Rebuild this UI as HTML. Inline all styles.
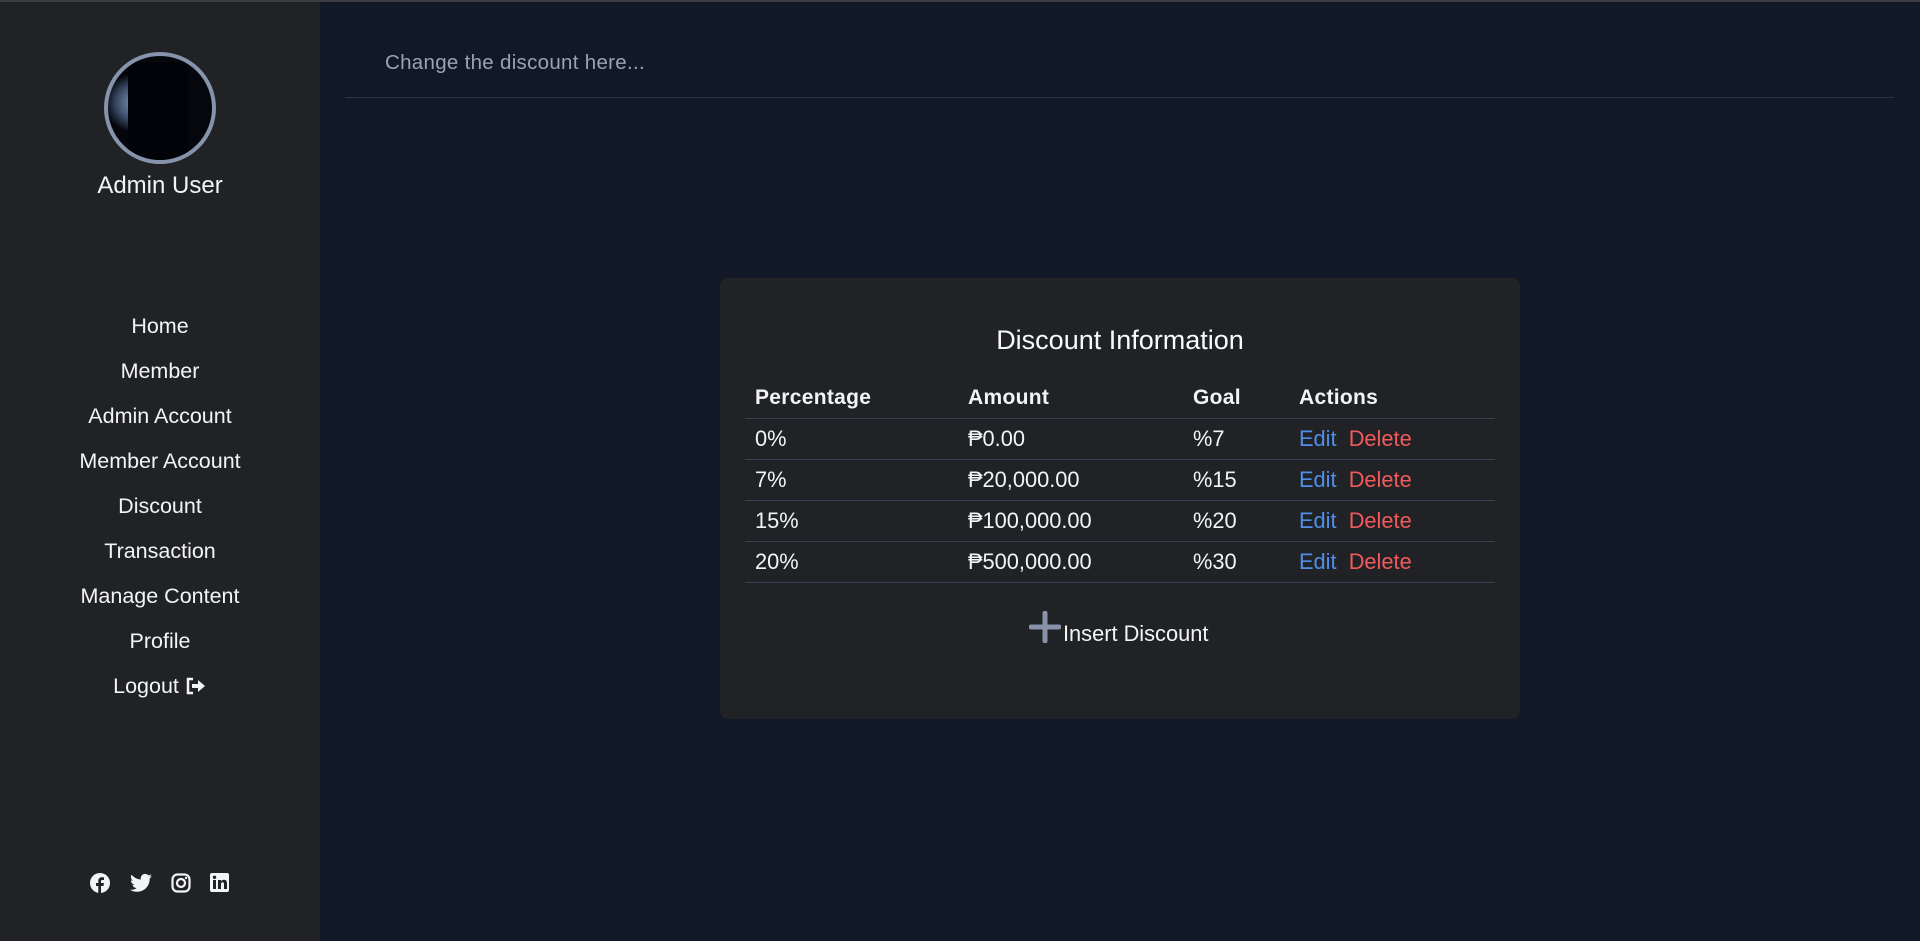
<!DOCTYPE html>
<html><head><meta charset="utf-8"><style>
*{margin:0;padding:0;box-sizing:border-box}
body{width:1920px;height:941px;background:#111827;font-family:"Liberation Sans",Arial,sans-serif;color:#e5e7eb;position:relative;overflow:hidden}
.topline{position:absolute;left:0;top:0;width:1920px;height:2px;background:#3a3d44}
.side{position:absolute;left:0;top:2px;width:320px;height:939px;background:#212226}
.avatar{position:absolute;left:104px;top:50px;width:112px;height:112px;border-radius:50%;border:4px solid #8593ab;background:radial-gradient(circle at 25% 45%,#7d94b3 0,#3a4a66 18%,#05070d 30%),#000;overflow:hidden}
.avatar:after{content:"";position:absolute;left:20px;top:6px;width:60px;height:100px;background:#020308;border-radius:10px 10px 0 0}
.name{position:absolute;left:0;width:320px;top:170px;text-align:center;font-size:24px;color:#f3f4f6}
.nav{position:absolute;left:0;width:320px;text-align:center;font-size:21.5px;color:#f3f4f6}
.soc{position:absolute;top:873px}
.hdr{position:absolute;left:385px;top:51px;font-size:20.5px;color:#9ca3af;letter-spacing:.3px}
.hline{position:absolute;left:345px;top:97px;width:1549px;height:1px;background:#2b3241}
.card{position:absolute;left:720px;top:278px;width:800px;height:441px;background:#212226;border-radius:8px}
.title{position:absolute;left:0;width:800px;top:325px;text-align:center;font-size:27px;color:#f9fafb}
.t{position:absolute;font-size:21.8px;color:#f3f4f6}
.b{font-weight:bold;font-size:21px;letter-spacing:.3px}
.l{position:absolute;left:745px;width:750px;height:1px;background:#374151}
.e{color:#4f8fea}.d{color:#f05a5a}
</style></head><body>
<div class="topline"></div>
<div class="side">
<div class="avatar"></div>
<div class="name">Admin User</div>
</div>
<div class="nav" style="top:314px">Home</div>
<div class="nav" style="top:359px">Member</div>
<div class="nav" style="top:404px">Admin Account</div>
<div class="nav" style="top:449px">Member Account</div>
<div class="nav" style="top:494px">Discount</div>
<div class="nav" style="top:539px">Transaction</div>
<div class="nav" style="top:584px">Manage Content</div>
<div class="nav" style="top:629px">Profile</div>
<div class="nav" style="top:674px">Logout <svg width="22" height="18" viewBox="0 0 22 18" style="vertical-align:-2px"><path d="M8 2H3v14h5" fill="none" stroke="#f3f4f6" stroke-width="2.5"/><path d="M7 7h6V3l7 6-7 6v-4H7z" fill="#f3f4f6"/></svg></div>
<svg class="soc" style="left:90px" width="20" height="20" viewBox="0 0 20 20"><circle cx="10" cy="10" r="10" fill="#f3f4f6"/><path d="M11 20v-7h2.5l.4-3H11V8.3c0-.8.3-1.3 1.4-1.3H14V4.4c-.4 0-1.3-.1-2.2-.1C9.700 4.300 8.300 5.600 8.300 7.900V10H6v3h2.3v7z" fill="#212226"/></svg>
<svg class="soc" style="left:130px" width="22" height="20" viewBox="0 0 24 20"><path d="M24 2.4a10 10 0 0 1-2.8.8A5 5 0 0 0 23.300.5a10 10 0 0 1-3.100 1.200A4.900 4.900 0 0 0 11.800 6.200 14 14 0 0 1 1.700 1 4.900 4.900 0 0 0 3.200 7.600 4.900 4.900 0 0 1 1 7v.1a4.900 4.900 0 0 0 3.900 4.800 5 5 0 0 1-2.200.1 4.900 4.900 0 0 0 4.600 3.400A9.900 9.900 0 0 1 0 17.400 14 14 0 0 0 7.500 19.600c9.100 0 14-7.500 14-14v-.6A10 10 0 0 0 24 2.400z" fill="#f3f4f6"/></svg>
<svg class="soc" style="left:171px" width="20" height="20" viewBox="0 0 20 20"><rect x="1.5" y="1.5" width="17" height="17" rx="5" fill="none" stroke="#f3f4f6" stroke-width="2.2"/><circle cx="10" cy="10" r="4" fill="none" stroke="#f3f4f6" stroke-width="2.2"/><circle cx="15" cy="5" r="1.2" fill="#f3f4f6"/></svg>
<svg class="soc" style="left:210px" width="19" height="19" viewBox="0 0 19 19"><rect width="19" height="19" rx="2" fill="#f3f4f6"/><rect x="3" y="7" width="3" height="9" fill="#212226"/><circle cx="4.5" cy="4.300" r="1.700" fill="#212226"/><path d="M8 7h3v1.400c.6-1 1.700-1.600 3-1.600 2.200 0 3 1.400 3 3.800V16h-3v-4.800c0-1.200-.3-2-1.300-2S11 10 11 11.200V16H8z" fill="#212226"/></svg>
<div class="hdr">Change the discount here...</div>
<div class="hline"></div>
<div class="card"></div>
<div class="title" style="left:720px">Discount Information</div>
<div class="t b" style="left:755px;top:386px">Percentage</div>
<div class="t b" style="left:968px;top:386px">Amount</div>
<div class="t b" style="left:1193px;top:386px">Goal</div>
<div class="t b" style="left:1299px;top:386px">Actions</div>
<div class="l" style="top:418px"></div>
<div class="t" style="left:755px;top:426px">0%</div><div class="t" style="left:968px;top:426px">₱0.00</div><div class="t" style="left:1193px;top:426px">%7</div><div class="t" style="left:1299px;top:426px"><span class="e">Edit</span>&nbsp; <span class="d">Delete</span></div>
<div class="l" style="top:459px"></div>
<div class="t" style="left:755px;top:467px">7%</div><div class="t" style="left:968px;top:467px">₱20,000.00</div><div class="t" style="left:1193px;top:467px">%15</div><div class="t" style="left:1299px;top:467px"><span class="e">Edit</span>&nbsp; <span class="d">Delete</span></div>
<div class="l" style="top:500px"></div>
<div class="t" style="left:755px;top:508px">15%</div><div class="t" style="left:968px;top:508px">₱100,000.00</div><div class="t" style="left:1193px;top:508px">%20</div><div class="t" style="left:1299px;top:508px"><span class="e">Edit</span>&nbsp; <span class="d">Delete</span></div>
<div class="l" style="top:541px"></div>
<div class="t" style="left:755px;top:549px">20%</div><div class="t" style="left:968px;top:549px">₱500,000.00</div><div class="t" style="left:1193px;top:549px">%30</div><div class="t" style="left:1299px;top:549px"><span class="e">Edit</span>&nbsp; <span class="d">Delete</span></div>
<div class="l" style="top:582px"></div>
<svg style="position:absolute;left:1029px;top:611px" width="32" height="32" viewBox="0 0 32 32"><path d="M16 2v28M2 16h28" stroke="#8893aa" stroke-width="5" stroke-linecap="round"/></svg>
<div class="t" style="left:1063px;top:621px">Insert Discount</div>
</body></html>
